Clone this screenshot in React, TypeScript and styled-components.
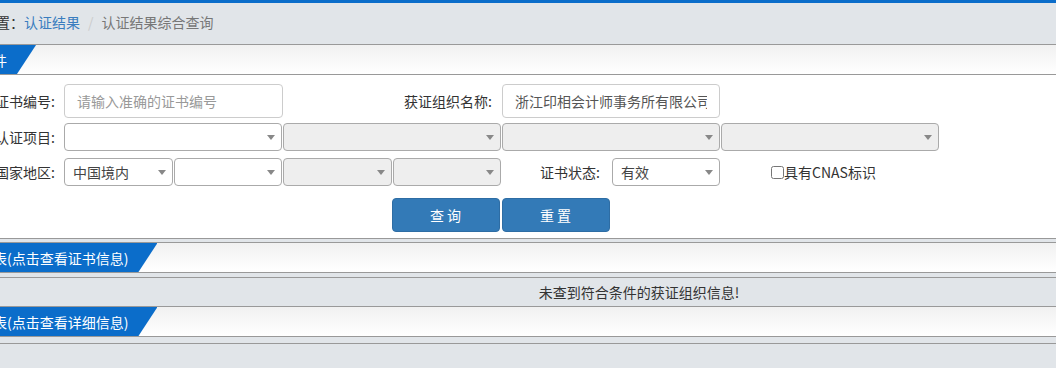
import React from "react";
import styled, { createGlobalStyle } from "styled-components";

const GlobalStyle = createGlobalStyle`
  html, body {
    margin: 0;
    padding: 0;
    overflow: hidden;
    background: #e1e5e9;
  }
  body {
    font-family: "Noto Sans CJK SC", "Liberation Sans", sans-serif;
    font-size: 14px;
    color: #333;
  }
`;

const blue = "#0b6dca";
const line = "#999";

const App = () => {
  return (
    <>
      <GlobalStyle />
      <Page>
        <TopBar />
        <Breadcrumb>
          <span>当前位置：</span>
          <CrumbLink>认证结果</CrumbLink>
          <CrumbSep>/</CrumbSep>
          <CrumbActive>认证结果综合查询</CrumbActive>
        </Breadcrumb>

        <SectionHeader>
          <Tab>查询条件</Tab>
        </SectionHeader>

        <FormPanel>
          <FormRow $h={34} $top={9}>
            <Label>证书编号:</Label>
            <TextInput $w={219} placeholder="请输入准确的证书编号" />
            <Label $pad={10}>获证组织名称:</Label>
            <TextInput $w={218} defaultValue="浙江印相会计师事务所有限公司" />
          </FormRow>

          <FormRow $h={28} $top={5}>
            <Label>认证项目:</Label>
            <SelectGroup $span={4}>
              <SelectWrap $w={218}>
                <Select />
              </SelectWrap>
              <SelectWrap $w={218}>
                <Select disabled />
              </SelectWrap>
              <SelectWrap $w={218}>
                <Select disabled />
              </SelectWrap>
              <SelectWrap $w={218}>
                <Select disabled />
              </SelectWrap>
            </SelectGroup>
          </FormRow>

          <FormRow $h={28} $top={7}>
            <Label>国家地区:</Label>
            <SelectGroup $span={2}>
              <SelectWrap $w={108.5}>
                <Select defaultValue="cn">
                  <option value="cn">中国境内</option>
                </Select>
              </SelectWrap>
              <SelectWrap $w={108.5}>
                <Select />
              </SelectWrap>
              <SelectWrap $w={108.5}>
                <Select disabled />
              </SelectWrap>
              <SelectWrap $w={108.5}>
                <Select disabled />
              </SelectWrap>
            </SelectGroup>
            <StatusCell>
              <span>证书状态:</span>
              <SelectWrap $w={108}>
                <Select defaultValue="1">
                  <option value="1">有效</option>
                </Select>
              </SelectWrap>
            </StatusCell>
            <CheckLabel>
              <CheckBox type="checkbox" />
              具有CNAS标识
            </CheckLabel>
          </FormRow>

          <FormRow $h={34} $top={12}>
            <ButtonBar>
              <Button>查 询</Button>
              <Button>重 置</Button>
            </ButtonBar>
          </FormRow>
        </FormPanel>

        <SectionHeader $top={3} $borderTop>
          <Tab>证书列表(点击查看证书信息)</Tab>
        </SectionHeader>

        <ResultRow>未查到符合条件的获证组织信息!</ResultRow>

        <SectionHeader>
          <Tab>组织列表(点击查看详细信息)</Tab>
        </SectionHeader>

        <BottomTable />
      </Page>
    </>
  );
};

export default App;

const Page = styled.div`
  width: 1398px;
  margin-left: -60px;
  min-height: 368px;
  display: flex;
  flex-direction: column;
  background: #e1e5e9;
`;

const TopBar = styled.div`
  height: 3px;
  background: ${blue};
`;

const Breadcrumb = styled.div`
  height: 42px;
  box-sizing: border-box;
  display: flex;
  align-items: center;
  padding: 0 0 3px 14px;
  border-bottom: 1px solid ${line};
  line-height: 20px;
  color: #333;
`;

const CrumbLink = styled.span`
  color: #3a7dbf;
`;

const CrumbSep = styled.span`
  color: #ccc;
  margin: 0 8px;
`;

const CrumbActive = styled.span`
  color: #777;
`;

const SectionHeader = styled.div<{ $top?: number; $borderTop?: boolean }>`
  height: 29px;
  margin-top: ${(p) => p.$top ?? 0}px;
  border-top: ${(p) => (p.$borderTop ? `1px solid ${line}` : "none")};
  border-bottom: 1px solid ${line};
  background: linear-gradient(to bottom, #f1f1f1, #ffffff);
  display: flex;
`;

const Tab = styled.div`
  display: flex;
  align-items: center;
  padding: 0 29px 0 11px;
  background: ${blue};
  color: #fff;
  font-size: 14px;
  line-height: 20px;
  clip-path: polygon(0 0, 100% 0, calc(100% - 19px) 100%, 0 100%);
`;

const FormPanel = styled.div`
  height: 164px;
  box-sizing: border-box;
  background: #fff;
  border-bottom: 1px solid ${line};
  display: flex;
  flex-direction: column;
`;

const FormRow = styled.div<{ $h: number; $top: number }>`
  display: grid;
  grid-template-columns: 124px 219px 219px 219px 219px;
  align-items: center;
  height: ${(p) => p.$h}px;
  margin-top: ${(p) => p.$top}px;
`;

const Label = styled.label<{ $pad?: number }>`
  text-align: right;
  padding-right: ${(p) => p.$pad ?? 9}px;
  color: #333;
  line-height: 20px;
  white-space: nowrap;
`;

const TextInput = styled.input<{ $w: number }>`
  width: ${(p) => p.$w}px;
  height: 34px;
  box-sizing: border-box;
  padding: 6px 12px;
  border: 1px solid #ccc;
  border-radius: 4px;
  font: inherit;
  color: #555;
  background: #fff;
  outline: none;

  &::placeholder {
    color: #999;
  }
`;

const SelectGroup = styled.div<{ $span: number }>`
  grid-column: span ${(p) => p.$span};
  display: flex;
  gap: 1px;
`;

const SelectWrap = styled.div<{ $w: number }>`
  position: relative;
  flex: none;
  width: ${(p) => p.$w}px;
  height: 28px;

  &::after {
    content: "";
    position: absolute;
    right: 7px;
    top: 12px;
    border-style: solid;
    border-width: 5px 4px 0;
    border-color: #888 transparent transparent;
    pointer-events: none;
  }
`;

const Select = styled.select`
  appearance: none;
  width: 100%;
  height: 100%;
  box-sizing: border-box;
  border: 1px solid #aaa;
  border-radius: 4px;
  background: #fff;
  padding: 0 20px 0 8px;
  font: inherit;
  color: #444;
  outline: none;

  &:disabled {
    background: #eee;
    opacity: 1;
  }
`;

const StatusCell = styled.div`
  display: flex;
  align-items: center;
  justify-content: flex-end;
  gap: 12px;
  padding-right: 1px;
  line-height: 20px;
`;

const CheckLabel = styled.label`
  display: flex;
  align-items: center;
  padding-left: 50px;
  color: #333;
  line-height: 20px;
  white-space: nowrap;
`;

const CheckBox = styled.input`
  width: 13px;
  height: 13px;
  margin: 0;
`;

const ButtonBar = styled.div`
  grid-column: 2 / 6;
  display: flex;
  justify-content: center;
  gap: 2px;
  padding-right: 3px;
`;

const Button = styled.button`
  width: 108px;
  height: 34px;
  background: #337ab7;
  border: 1px solid #2e6da4;
  border-radius: 4px;
  color: #fff;
  font: inherit;
  cursor: pointer;
`;

const ResultRow = styled.div`
  margin-top: 4px;
  height: 28px;
  border-top: 1px solid ${line};
  border-bottom: 1px solid ${line};
  display: flex;
  align-items: center;
  justify-content: center;
  color: #333;
  line-height: 20px;
`;

const BottomTable = styled.div`
  margin-top: 6px;
  flex: 1;
  border-top: 1px solid ${line};
`;
